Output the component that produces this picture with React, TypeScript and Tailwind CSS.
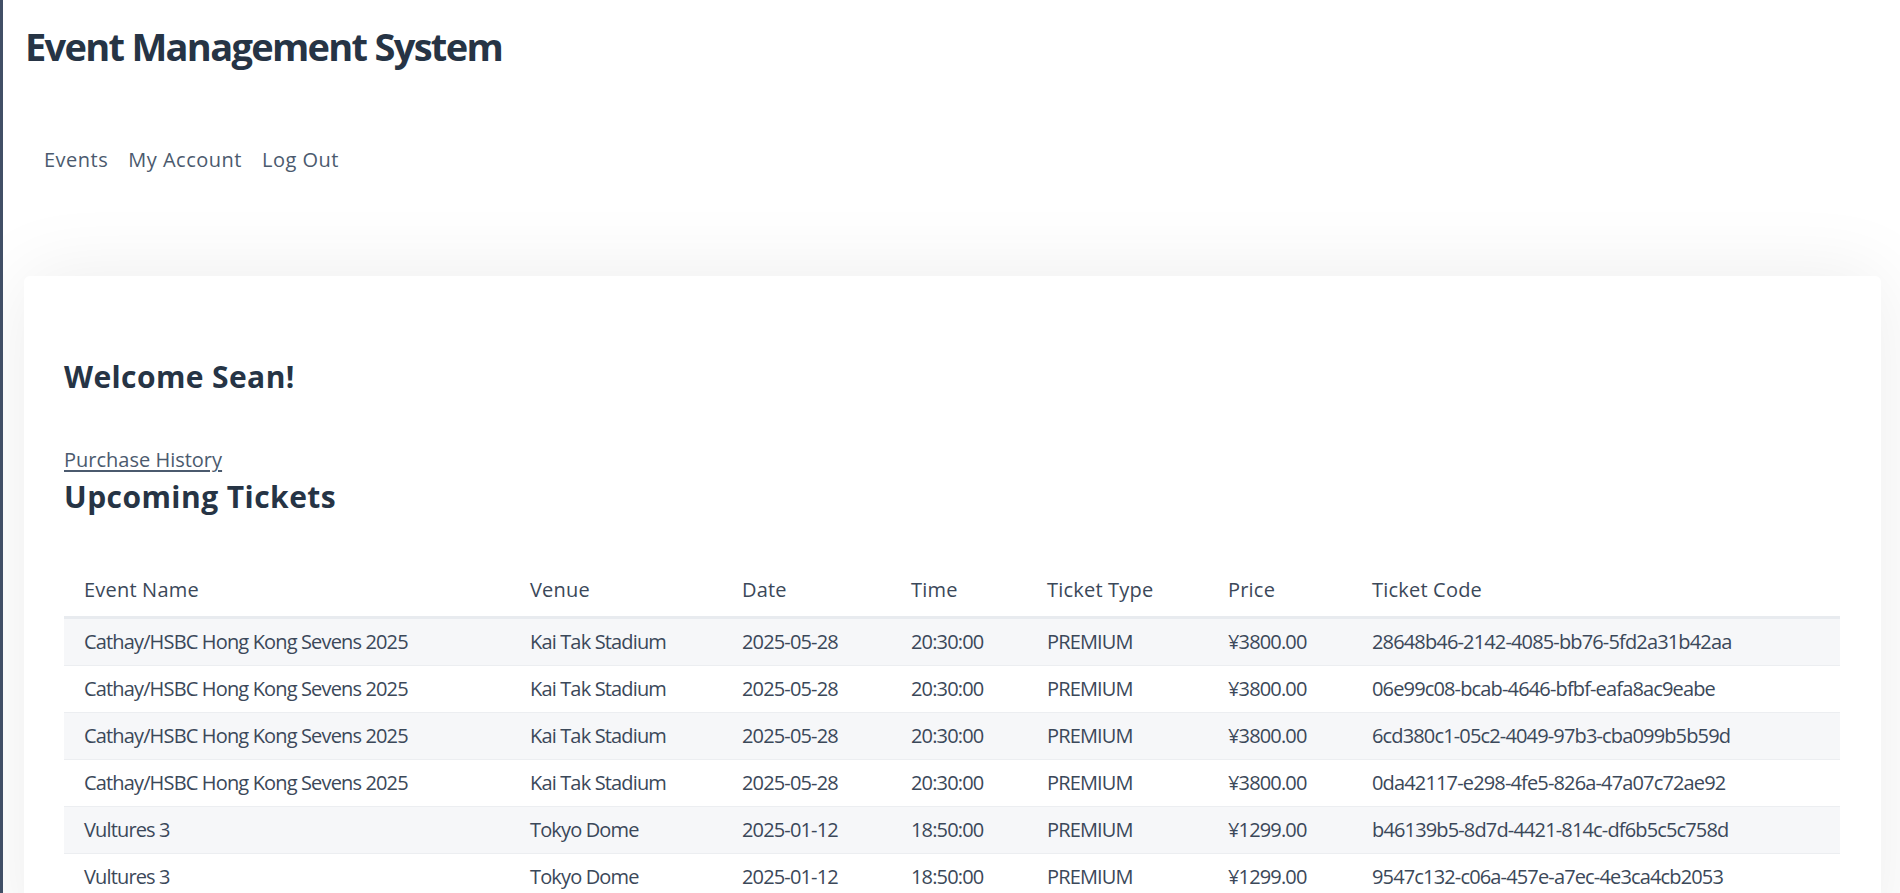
import React from "react";

type Ticket = {
  event: string;
  venue: string;
  date: string;
  time: string;
  type: string;
  price: string;
  code: string;
};

const HKS = "Cathay/HSBC Hong Kong Sevens 2025";

const tickets: Ticket[] = [
  { event: HKS, venue: "Kai Tak Stadium", date: "2025-05-28", time: "20:30:00", type: "PREMIUM", price: "¥3800.00", code: "28648b46-2142-4085-bb76-5fd2a31b42aa" },
  { event: HKS, venue: "Kai Tak Stadium", date: "2025-05-28", time: "20:30:00", type: "PREMIUM", price: "¥3800.00", code: "06e99c08-bcab-4646-bfbf-eafa8ac9eabe" },
  { event: HKS, venue: "Kai Tak Stadium", date: "2025-05-28", time: "20:30:00", type: "PREMIUM", price: "¥3800.00", code: "6cd380c1-05c2-4049-97b3-cba099b5b59d" },
  { event: HKS, venue: "Kai Tak Stadium", date: "2025-05-28", time: "20:30:00", type: "PREMIUM", price: "¥3800.00", code: "0da42117-e298-4fe5-826a-47a07c72ae92" },
  { event: "Vultures 3", venue: "Tokyo Dome", date: "2025-01-12", time: "18:50:00", type: "PREMIUM", price: "¥1299.00", code: "b46139b5-8d7d-4421-814c-df6b5c5c758d" },
  { event: "Vultures 3", venue: "Tokyo Dome", date: "2025-01-12", time: "18:50:00", type: "PREMIUM", price: "¥1299.00", code: "9547c132-c06a-457e-a7ec-4e3ca4cb2053" },
];

const columns = [
  { label: "Event Name", w: "w-[446px]" },
  { label: "Venue", w: "w-[212px]" },
  { label: "Date", w: "w-[169px]" },
  { label: "Time", w: "w-[136px]" },
  { label: "Ticket Type", w: "w-[181px]" },
  { label: "Price", w: "w-[144px]" },
  { label: "Ticket Code", w: "w-[488px]" },
];

export default function App() {
  return (
    <div className="flex min-h-[893px] bg-white text-[#3b4859] font-['Open_Sans',sans-serif]">
      <div className="w-[3px] shrink-0 bg-[#414f66]" />

      <div className="flex-1 overflow-hidden">
        {/* Header */}
        <h1 className="pl-[22px] pt-[22px] text-[38px] leading-[48px] font-bold text-[#263445] tracking-[-1.7px]">
          Event Management System
        </h1>

        <nav className="mt-[76px] flex gap-[20px] pl-[41px] text-[20px] leading-[28px] text-[#4b5a6e] tracking-[0.5px]">
          <a href="#">Events</a>
          <a href="#">My Account</a>
          <a href="#">Log Out</a>
        </nav>

        {/* Main card */}
        <div className="ml-[21px] mr-[19px] mt-[102px] rounded-[6px] bg-white px-10 pt-[83px] pb-10 shadow-[0_0_80px_rgba(0,0,0,0.08)]">
          <h2 className="text-[30px] leading-[36px] font-bold text-[#263445] tracking-[0.4px]">
            Welcome Sean!
          </h2>

          <a href="#" className="mt-[51px] block w-fit text-[20px] leading-[28px] text-[#4b5a6e] underline underline-offset-[3px]">
            Purchase History
          </a>

          <h2 className="mt-[5px] text-[30px] leading-[36px] font-bold text-[#263445] tracking-[0.45px]">
            Upcoming Tickets
          </h2>

          <table className="mt-[52px] w-[1776px] table-fixed border-collapse text-left text-[20px] leading-[30px]">
            <colgroup>
              {columns.map((c) => (
                <col key={c.label} className={c.w} />
              ))}
            </colgroup>
            <thead>
              <tr>
                {columns.map((c) => (
                  <th key={c.label} className="border-b-[3px] border-[#e8ebef] px-5 pt-2 pb-[11px] font-normal tracking-[0.2px]">
                    {c.label}
                  </th>
                ))}
              </tr>
            </thead>
            <tbody>
              {tickets.map((t, i) => (
                <tr key={t.code} className={i % 2 === 0 ? "bg-[#f6f7f9]" : "bg-white"}>
                  {[t.event, t.venue, t.date, t.time, t.type, t.price, t.code].map((v, j) => (
                    <td key={j} className="border-b border-[#eceef1] px-5 py-2 whitespace-nowrap tracking-[-0.85px]">
                      {v}
                    </td>
                  ))}
                </tr>
              ))}
            </tbody>
          </table>
        </div>
      </div>
    </div>
  );
}
